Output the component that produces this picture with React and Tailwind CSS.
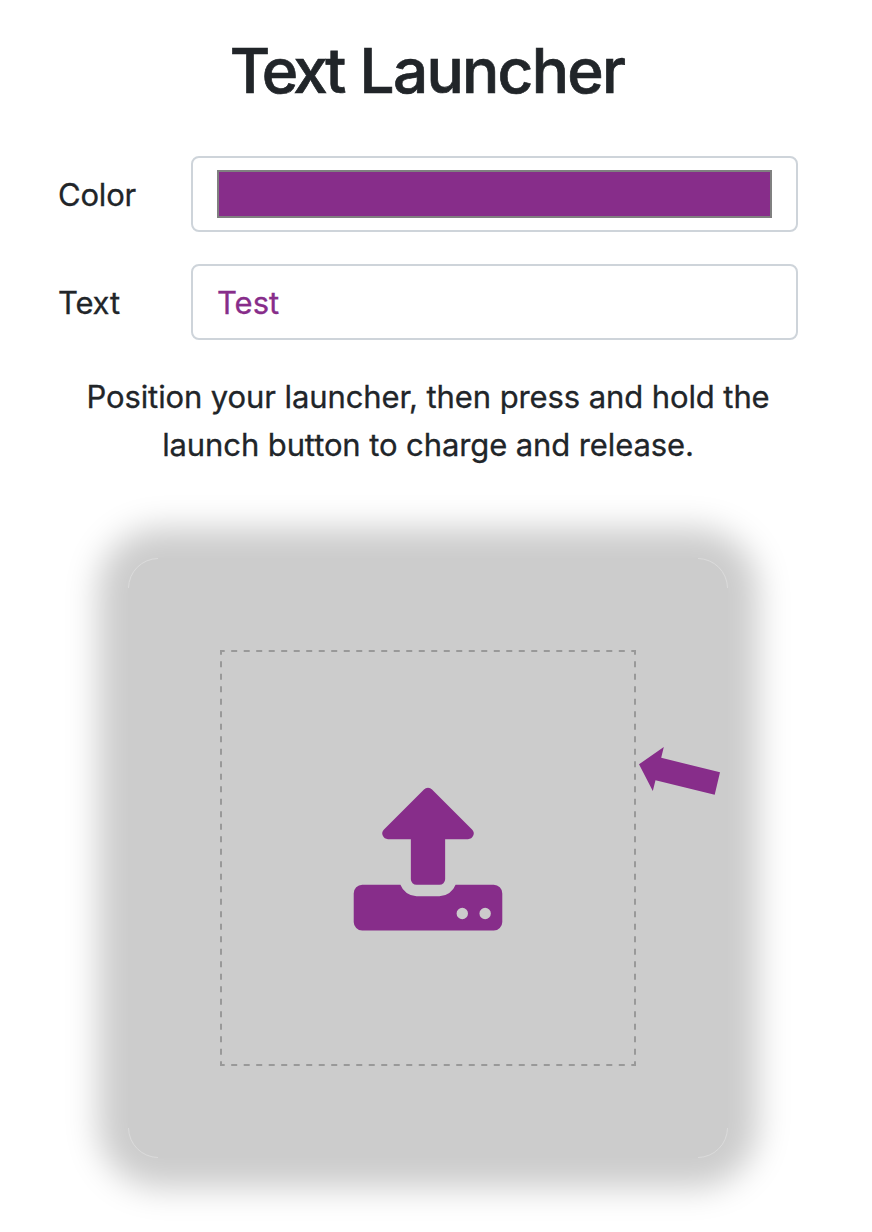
function Field({ label, children }) {
  return (
    <div className="flex h-[76px] items-center">
      <div className="w-[133px] pt-0.5 text-[31px] tracking-[-0.2px] [-webkit-text-stroke:0.3px_#212529]">{label}</div>
      <div className="h-[76px] w-[607px] rounded-lg border-2 border-[#ced4da] bg-white px-6 py-3">
        {children}
      </div>
    </div>
  );
}

export default function App() {
  return (
    <main className="flex h-[1232px] w-[856px] flex-col items-center font-['Inter','Liberation_Sans',sans-serif] text-[#212529]">
      <h1 className="mt-8 h-[77px] pr-0.5 text-[62px] leading-[77px] font-medium tracking-[-1.7px] whitespace-nowrap [word-spacing:2px] [-webkit-text-stroke:0.7px_#212529]">
        <span className="tracking-[-3.6px]">Text</span> Launcher
      </h1>
      <form className="mt-[47px] flex w-[740px] flex-col gap-8">
        <Field label="Color">
          <div className="h-12 w-[555px] border-2 border-[#808080] bg-[#872d8a]" />
        </Field>
        <Field label="Text">
          <div className="pt-px text-[31px] leading-[48px] text-[#872d8a] [-webkit-text-stroke:0.3px_#872d8a]">Test</div>
        </Field>
      </form>
      <p className="mt-[33px] text-center text-[31px] leading-[48px] tracking-[-0.1px] whitespace-nowrap [-webkit-text-stroke:0.3px_#212529]">
        Position your launcher, then press and hold the
        <br />
        launch button to charge and release.
      </p>
      <section className="relative mt-[89px] flex size-[600px] shrink-0 items-center justify-center rounded-[32px] bg-[#ccc] shadow-[0_0_33px_30px_#ccc]">
        <svg className="absolute inset-0 size-[600px]" viewBox="0 0 600 600" fill="none" stroke="#dcdcdc" strokeWidth="0.9">
          <path d="M.5 30A30 30 0 0 1 30 .5M570 .5A30 30 0 0 1 599.5 30M599.5 570A30 30 0 0 1 570 599.5M30 599.5A30 30 0 0 1 .5 570" />
        </svg>
        <div className="relative flex size-[416px] items-center justify-center">
          <svg className="absolute inset-0 size-[416px]" viewBox="0 0 416 416" fill="none" stroke="#999" strokeWidth="2">
            <path d="M0 1H416M0 415H416M1 0V416M415 0V416" strokeDasharray="6 6.503" strokeDashoffset="1.3" />
          </svg>
          <svg className="mt-[7px] size-[160px]" viewBox="0 0 1792 1792" fill="#872d8a">
            <path d="M1344 1472q0-26-19-45t-45-19-45 19-19 45 19 45 45 19 45-19 19-45zm256 0q0-26-19-45t-45-19-45 19-19 45 19 45 45 19 45-19 19-45zm128-224v320q0 40-28 68t-68 28h-1472q-40 0-68-28t-28-68v-320q0-40 28-68t68-28h427q21 56 70.5 92t110.5 36h256q61 0 110.5-36t70.5-92h427q40 0 68 28t28 68zm-325-648q-17 40-59 40h-256v448q0 26-19 45t-45 19h-256q-26 0-45-19t-19-45v-448h-256q-42 0-59-40-17-39 14-69l448-448q18-19 45-19t45 19l448 448q31 30 14 69z" />
          </svg>
        </div>
        <svg className="absolute top-[187px] left-[510px] h-[52px] w-[84px]" viewBox="0 0 84 52" fill="#872d8a">
          <path d="M1 19.3 25.8 2l-2.6 10.8L82 27.3l-5.3 22.5-59.2-14.5-2.7 10.8z" />
        </svg>
      </section>
    </main>
  );
}
